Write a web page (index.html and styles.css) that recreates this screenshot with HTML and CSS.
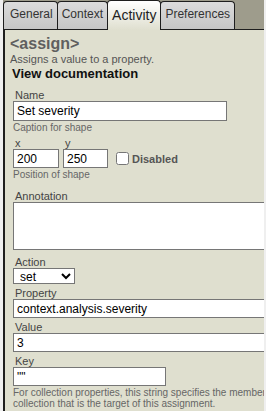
FILE: index.html
```html
<!DOCTYPE html>
<html lang="en">
<head>
    <meta charset="UTF-8">
    <meta name="viewport" content="width=device-width, initial-scale=1.0">
    <title>Activity properties</title>
    <link rel="stylesheet" href="styles.css">
</head>
<body>
    <div class="frame">
        <div class="tabs">
            <div class="tab">General</div>
            <div class="tab">Context</div>
            <div class="tab active">Activity</div>
            <div class="tab">Preferences</div>
        </div>
        <div class="panel">
            <div class="intro">
                <h2 class="tag">&lt;assign&gt;</h2>
                <div class="desc">Assigns a value to a property.</div>
                <div class="doc">View documentation</div>
            </div>
            <div class="fields">
                <label class="label">Name</label>
                <input type="text" class="input name" value="Set severity">
                <div class="hint">Caption for shape</div>

                <div class="pos">
                    <div class="coord">
                        <label class="label">x</label>
                        <input type="text" class="input small" value="200">
                    </div>
                    <div class="coord">
                        <label class="label">y</label>
                        <input type="text" class="input small" value="250">
                    </div>
                    <label class="check"><input type="checkbox"> Disabled</label>
                </div>
                <div class="hint">Position of shape</div>

                <label class="label gap">Annotation</label>
                <textarea class="input area"></textarea>

                <label class="label gap">Action</label>
                <select class="input action">
                    <option>set</option>
                </select>

                <label class="label">Property</label>
                <input type="text" class="input wide" value="context.analysis.severity">

                <label class="label">Value</label>
                <input type="text" class="input wide" value="3">

                <label class="label">Key</label>
                <input type="text" class="input key" value='""'>
                <div class="hint long">For collection properties, this string specifies the member of the collection that is the target of this assignment.</div>
            </div>
        </div>
    </div>
</body>
</html>
```
FILE: styles.css
```css
body {
    margin: 0;
    background-color: #efefef;
    font-family: "Liberation Sans", Arial, sans-serif;
    overflow: hidden;
}
.frame {
    margin-left: 3px;
    margin-right: 2px;
    height: 411px;
    overflow: hidden;
    display: flex;
    flex-direction: column;
}
.tabs {
    display: flex;
    align-items: flex-end;
    height: 30px;
    padding-top: 1px;
    box-sizing: border-box;
    background-color: #9e9c8c;
    border-bottom: 1px solid #1e1e1e;
}
.tab {
    height: 28px;
    box-sizing: border-box;
    padding: 5px 4px 0 4px;
    font-size: 12px;
    line-height: 14px;
    color: #333;
    background: linear-gradient(#dcdcdc, #c6c6c6);
    border: 1px solid #1e1e1e;
    border-bottom: none;
    border-radius: 4px 4px 0 0;
    margin-right: -1px;
    white-space: nowrap;
}
.tab:first-child {
    padding-left: 6px;
}
.tab.active {
    height: 30px;
    margin-bottom: -1px;
    padding-top: 6px;
    font-size: 14px;
    line-height: 16px;
    color: #222;
    background: linear-gradient(#ffffff, #dfdfcf);
    position: relative;
}
.panel {
    flex: 1;
    background-color: #dfdfcf;
    border-left: 2px solid #1e1e1e;
    width: 320px;
}
.intro {
    padding: 4px 0 0 5px;
}
.tag {
    margin: 0;
    font-size: 16px;
    line-height: 19px;
    color: #5f5f5f;
}
.desc {
    font-size: 11px;
    line-height: 13px;
    color: #555;
}
.doc {
    font-size: 13px;
    font-weight: bold;
    line-height: 16px;
    color: #111;
    margin-left: 2px;
}
.fields {
    padding: 7px 0 0 8px;
    display: flex;
    flex-direction: column;
    align-items: flex-start;
}
.label {
    font-size: 11px;
    line-height: 12px;
    color: #444;
    margin-left: 2px;
}
.label.gap {
    margin-top: 6px;
}
.input {
    box-sizing: border-box;
    border: 1px solid #767676;
    background-color: #fff;
    font-family: "Liberation Sans", Arial, sans-serif;
    font-size: 12px;
    color: #000;
    padding: 0 3px;
    height: 19px;
    margin: 0;
    border-radius: 0;
}
.name {
    width: 214px;
    height: 20px;
}
.hint {
    font-size: 10px;
    line-height: 12px;
    color: #666;
    margin: 1px 0 3px;
}
.hint.long {
    width: 300px;
    line-height: 11px;
    margin-top: 1px;
}
.pos {
    display: flex;
    align-items: flex-end;
    gap: 4px;
}
.coord {
    display: flex;
    flex-direction: column;
}
.small {
    width: 46px;
}
.coord + .coord .small {
    width: 45px;
}
.check {
    font-size: 11px;
    font-weight: bold;
    color: #555;
    display: flex;
    align-items: center;
    margin: 0 0 3px 4px;
}
.check input {
    margin: 0 3px 0 0;
    width: 13px;
    height: 13px;
}
.area {
    width: 262px;
    height: 48px;
    resize: none;
}
.action {
    width: 62px;
    height: 16px;
    padding: 0 2px;
    margin-bottom: 3px;
    font-size: 12px;
}
.wide {
    width: 262px;
    margin-bottom: 3px;
}
.key {
    width: 153px;
}
```
